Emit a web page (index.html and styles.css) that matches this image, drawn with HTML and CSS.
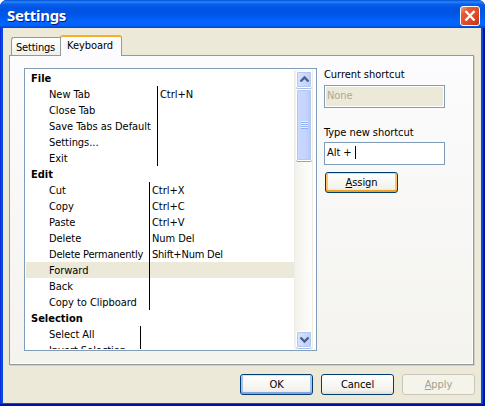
FILE: index.html
```
<!DOCTYPE html>
<html lang="en">
<head>
<meta charset="utf-8">
<title>Settings</title>
<link rel="stylesheet" href="styles.css">
</head>
<body>
<div class="window">
  <header class="titlebar">
    <h1>Settings</h1>
    <button class="close" aria-label="Close"><svg width="18" height="18" viewBox="0 0 18 18"><path d="M4.500 4l9 9.500M13.500 4l-9 9.500" stroke="#fff" stroke-width="2.300"/></svg></button>
  </header>
  <main class="client">
    <nav class="tabs">
      <div class="tab">Settings</div>
      <div class="tab active">Keyboard</div>
    </nav>
    <section class="panel">
      <div class="list">
        <div class="rows">
          <h2>File</h2>
          <div class="group file">
            <div class="row"><span>New Tab</span><span>Ctrl+N</span></div>
            <div class="row"><span>Close Tab</span><span></span></div>
            <div class="row"><span>Save Tabs as Default</span><span></span></div>
            <div class="row"><span>Settings...</span><span></span></div>
            <div class="row"><span>Exit</span><span></span></div>
          </div>
          <h2>Edit</h2>
          <div class="group edit">
            <div class="row"><span>Cut</span><span>Ctrl+X</span></div>
            <div class="row"><span>Copy</span><span>Ctrl+C</span></div>
            <div class="row"><span>Paste</span><span>Ctrl+V</span></div>
            <div class="row"><span>Delete</span><span>Num Del</span></div>
            <div class="row tight"><span>Delete Permanently</span><span>Shift+Num Del</span></div>
            <div class="row selected"><span>Forward</span><span></span></div>
            <div class="row"><span>Back</span><span></span></div>
            <div class="row"><span>Copy to Clipboard</span><span></span></div>
          </div>
          <h2>Selection</h2>
          <div class="group selection">
            <div class="row"><span>Select All</span><span></span></div>
            <div class="row"><span>Invert Selection</span><span></span></div>
          </div>
        </div>
        <div class="scrollbar">
          <div class="arrow"><svg width="15" height="15" viewBox="0 0 15 15"><path d="M3.500 9.500l4-4 4 4" fill="none" stroke="#4d6185" stroke-width="2.400"/></svg></div>
          <div class="thumb"><i></i></div>
          <div class="arrow down"><svg width="15" height="15" viewBox="0 0 15 15"><path d="M3.500 5.500l4 4 4-4" fill="none" stroke="#4d6185" stroke-width="2.400"/></svg></div>
        </div>
      </div>
      <div class="side">
        <label>Current shortcut</label>
        <div class="field disabled">None</div>
        <label class="second">Type new shortcut</label>
        <div class="field">Alt + <i class="caret"></i></div>
        <button class="btn hot"><span><u>A</u>ssign</span></button>
      </div>
    </section>
    <footer class="actions">
      <button class="btn default"><span>OK</span></button>
      <button class="btn"><span>Cancel</span></button>
      <button class="btn off"><span><u>A</u>pply</span></button>
    </footer>
  </main>
</div>
</body>
</html>
```
FILE: styles.css
```
* { box-sizing: border-box; }
body {
  margin: 0;
  background: #fff;
  font: 11px/16px "DejaVu Sans Condensed", "DejaVu Sans", sans-serif;
  font-stretch: condensed;
  letter-spacing: -0.05px;
  color: #000;
}
.window {
  width: 485px;
  height: 406px;
  padding: 0 4px 3px 3px;
  border-radius: 7px 7px 0 0;
  overflow: hidden;
  background: #0848e0;
  box-shadow: inset -2px -2px 0 #00139c, inset 1px 0 0 #0831d9;
}
.titlebar {
  display: flex;
  align-items: center;
  justify-content: space-between;
  height: 28px;
  margin: 0 -4px 0 -3px;
  padding: 2px 5px 0 7px;
  background: linear-gradient(#0050d8 0, #2a85f5 2px, #0a60ee 4px, #0054e3 8px, #0055e5 14px, #0262fb 21px, #0264ff 25px, #0050dd 27px, #0045c8 28px);
}
.titlebar h1 {
  margin: 0;
  font: bold 15px/20px "Noto Sans", sans-serif;
  letter-spacing: -0.3px;
  color: #fff;
  text-shadow: 1px 1px 0 #0a1883;
}
.close {
  display: block;
  width: 20px;
  height: 20px;
  margin-top: 1px;
  padding: 0;
  border: 1px solid #fff;
  border-radius: 3px;
  background: linear-gradient(135deg, #f0a08a 0, #e3593a 25%, #dc4a24 65%, #b8321a);
}
.close svg { display: block; }
.client {
  height: 375px;
  padding: 7px 7px 0 6px;
  background: #ece9d8;
}
.tabs {
  display: flex;
  align-items: flex-end;
  height: 21px;
  padding-left: 2px;
  margin-bottom: -1px;
}
.tab {
  height: 18px;
  width: 50px;
  margin-bottom: 1px;
  padding-left: 4px;
  line-height: 19px;
  letter-spacing: -0.2px;
  border: 1px solid #919b9c;
  border-width: 1px 0 0 1px;
  border-radius: 3px 0 0 0;
  background: linear-gradient(#fff, #f0f0ea);
}
.tab.active {
  position: relative;
  height: 21px;
  width: 62px;
  margin-left: -1px;
  margin-bottom: 0;
  padding-left: 6px;
  line-height: 17px;
  letter-spacing: -0.05px;
  border-width: 0 1px 0 1px;
  border-top: 2px solid #f5b029;
  border-radius: 3px 3px 0 0;
  background: #fcfcfe;
}
.panel {
  display: flex;
  gap: 7px;
  width: 465px;
  height: 310px;
  padding: 12px 0 0 14px;
  border: 1px solid #919b9c;
  background: linear-gradient(#fcfcfe, #f4f3ee);
  box-shadow: 1px 1px 0 #d3d0c2, inset -1px -1px 0 #fff;
}
.list {
  display: flex;
  width: 293px;
  height: 283px;
  padding: 1px;
  border: 1px solid #7f9db9;
  background: #fff;
}
.rows { width: 268px; overflow: hidden; }
.rows h2 {
  height: 16px;
  margin: 0;
  padding-left: 5px;
  font: bold 11px/18px "DejaVu Sans Condensed", "DejaVu Sans", sans-serif;
  font-stretch: condensed;
  letter-spacing: 0;
}
.row { display: flex; height: 16px; line-height: 18px; white-space: nowrap; }
.row span:first-child {
  padding-left: 23px;
  border-right: 1px solid #000;
  flex: none;
}
.row span:last-child { padding-left: 2px; }
.file .row span:first-child { width: 132px; }
.edit .row span:first-child { width: 124px; }
.selection .row span:first-child { width: 115px; }
.row.tight { letter-spacing: -0.22px; }
.selected { background: #ece9d8; }
.scrollbar {
  display: flex;
  flex-direction: column;
  width: 19px;
  padding: 0 1px;
  border: 1px solid #eeede5;
  border-width: 0 1px;
  background: linear-gradient(90deg, #f3f1ec, #fefefb);
}
.arrow, .thumb {
  width: 16px;
  border: 1px solid #fff;
  outline: 1px solid #b6c8f0;
  outline-offset: -2px;
  border-radius: 2px;
  background: linear-gradient(100deg, #dae4ff, #b9cdfb);
}
.arrow { height: 17px; margin: 1px 0; box-shadow: 0 1px 0 #a9bde6; }
.arrow svg { display: block; margin-left: -0.5px; }
.down { margin-top: auto; }
.thumb {
  display: flex;
  align-items: center;
  justify-content: center;
  height: 72px;
  background: linear-gradient(90deg, #cad8fd, #c5d4fc 60%, #b4c8f8);
  box-shadow: 0 1px 0 #8aa5dc;
}
.thumb i {
  width: 7px;
  height: 8px;
  background: repeating-linear-gradient(#eef4fe 0 1px, #8cb0f8 1px 2px);
}
.side { display: flex; flex-direction: column; }
.side label { height: 17px; line-height: 13px; }
.side label.second { margin-top: 18px; height: 16px; }
.field {
  width: 121px;
  height: 23px;
  padding: 1px 2px;
  border: 1px solid #7f9db9;
  background: #fff;
  line-height: 17px;
  white-space: pre;
}
.disabled {
  background: #ece9d8;
  color: #aca899;
  box-shadow: inset 0 0 0 1px #fff;
}
.caret {
  display: inline-block;
  width: 1px;
  height: 13px;
  vertical-align: -3px;
  background: #000;
}
.btn {
  width: 73px;
  height: 21px;
  padding: 1px 0 0;
  border: 1px solid #003c74;
  border-radius: 3px;
  background: linear-gradient(#fff, #f3f2ec 80%, #e2ded2);
  font: inherit;
  letter-spacing: inherit;
  line-height: 18px;
  color: #000;
}
.btn u { text-underline-offset: 1px; }
.hot { margin: 7px 0 0 1px; box-shadow: inset 0 1px 0 #fdd889, inset 0 -2px 0 #f0a325, inset 2px 0 0 #fbc761, inset -2px 0 0 #fbc761; }
.default { box-shadow: inset 0 1px 0 #cee7ff, inset 0 -2px 0 #86a4e4, inset 2px 0 0 #a9c3f0, inset -2px 0 0 #a9c3f0; }
.off { border-color: #c9c7ba; background: #f5f4ea; color: #a1a192; }
.actions {
  display: flex;
  justify-content: flex-end;
  gap: 8px;
  margin: 9px -1px 0 0;
}
```
